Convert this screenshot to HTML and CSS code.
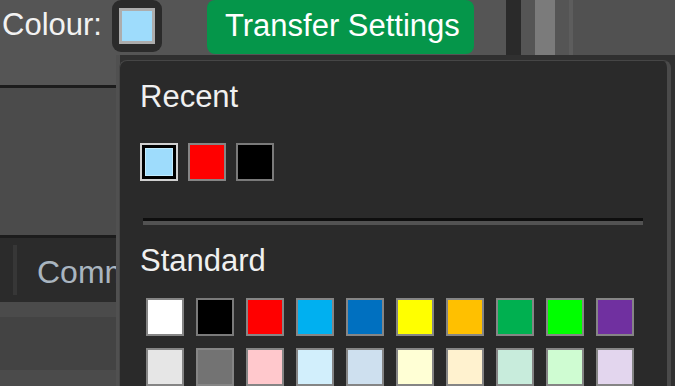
FILE: index.html
```html
<!DOCTYPE html>
<html>
<head>
<meta charset="utf-8">
<link rel="stylesheet" href="styles.css">
</head>
<body>
<div class="page">
  <header class="topbar">
    <span class="label">Colour:</span>
    <button class="swatch-btn"><span class="swatch-fill"></span></button>
    <button class="transfer">Transfer Settings</button>
    <div class="bar-dark"></div>
    <div class="bar-gray"></div>
    <div class="bar-line"></div>
    <div class="bar-rest"></div>
  </header>
  <div class="main">
    <aside class="side">
      <div class="side-top"></div>
      <div class="side-panel"></div>
      <div class="tabs"><span class="tab-sep"></span><span class="tab">Comments</span></div>
      <div class="side-gap"></div>
      <div class="side-box"></div>
      <div class="side-bottom"></div>
    </aside>
    <div class="strip"></div>
    <div class="content"></div>
  </div>
  <div class="popup">
    <div class="heading">Recent</div>
    <div class="recent">
      <span class="sw selected"><span class="sel-fill"></span></span>
      <span class="sw c-red"></span>
      <span class="sw c-black"></span>
    </div>
    <div class="sep"></div>
    <div class="heading heading-std">Standard</div>
    <div class="grid">
      <span class="cell"><span class="sw c-white"></span></span>
      <span class="cell"><span class="sw c-black"></span></span>
      <span class="cell"><span class="sw c-red"></span></span>
      <span class="cell"><span class="sw c-sky"></span></span>
      <span class="cell"><span class="sw c-blue"></span></span>
      <span class="cell"><span class="sw c-yellow"></span></span>
      <span class="cell"><span class="sw c-orange"></span></span>
      <span class="cell"><span class="sw c-green"></span></span>
      <span class="cell"><span class="sw c-lime"></span></span>
      <span class="cell"><span class="sw c-purple"></span></span>
      <span class="cell"><span class="sw l-gray"></span></span>
      <span class="cell"><span class="sw l-dgray"></span></span>
      <span class="cell"><span class="sw l-pink"></span></span>
      <span class="cell"><span class="sw l-sky"></span></span>
      <span class="cell"><span class="sw l-blue"></span></span>
      <span class="cell"><span class="sw l-yellow"></span></span>
      <span class="cell"><span class="sw l-orange"></span></span>
      <span class="cell"><span class="sw l-green"></span></span>
      <span class="cell"><span class="sw l-lime"></span></span>
      <span class="cell"><span class="sw l-purple"></span></span>
    </div>
  </div>
</div>
</body>
</html>
```

FILE: styles.css
```css
* { box-sizing: border-box; }
html, body { margin: 0; padding: 0; }
body {
  width: 675px;
  height: 386px;
  overflow: hidden;
  background: #555555;
  font-family: "Liberation Sans", Arial, sans-serif;
}
.page {
  position: relative;
  width: 675px;
  height: 386px;
  overflow: hidden;
  display: flex;
  flex-direction: column;
}
.topbar {
  display: flex;
  align-items: flex-start;
  height: 55px;
  flex: 0 0 55px;
}
.label {
  margin-left: 2px;
  padding-top: 7px;
  font-size: 31px;
  line-height: 36px;
  color: #f2f2f2;
  white-space: nowrap;
}
.swatch-btn {
  margin-left: 10px;
  width: 50px;
  height: 52px;
  border: none;
  padding: 0;
  border-radius: 9px;
  background: #2b2b2b;
  display: flex;
  align-items: center;
  justify-content: center;
}
.swatch-fill {
  display: block;
  width: 36px;
  height: 36px;
  border: 3px solid #adadad;
  background: #9edcfc;
}
.transfer {
  margin-left: 45px;
  height: 54px;
  border: none;
  border-radius: 8px;
  background: #05964a;
  color: #ffffff;
  font-family: "Liberation Sans", Arial, sans-serif;
  font-size: 31px;
  line-height: 51px;
  padding: 0 14px 3px 18px;
  white-space: nowrap;
}
.bar-dark { margin-left: 32px; width: 15px; height: 55px; background: #2a2a2a; }
.bar-gray { margin-left: 14px; width: 20px; height: 55px; background: #7b7b7b; }
.bar-line { margin-left: 14px; width: 4px; height: 55px; background: #5d5d5d; }
.bar-rest { flex: 1; height: 55px; background: #515151; }

.main {
  flex: 1;
  display: flex;
}
.side {
  width: 116px;
  display: flex;
  flex-direction: column;
  overflow: hidden;
}
.side-top { height: 30px; background: #555555; }
.side-panel {
  height: 153px;
  background: #4b4b4b;
  border-top: 3px solid #1c1c1c;
  border-bottom: 3px solid #1c1c1c;
}
.tabs {
  height: 64px;
  background: #2b2b2b;
  display: flex;
  align-items: flex-start;
  overflow: hidden;
}
.tab-sep {
  flex: 0 0 4px;
  margin-left: 13px;
  margin-top: 7px;
  height: 50px;
  background: #373737;
}
.tab {
  margin-left: 20px;
  padding-top: 16px;
  font-size: 32px;
  line-height: 36px;
  color: #a9b5c0;
  white-space: nowrap;
}
.side-gap { height: 15px; background: #4b4b4b; }
.side-box { height: 53px; background: #434343; }
.side-bottom { flex: 1; background: #4b4b4b; }
.strip { width: 4px; background: #505050; }
.content { flex: 1; background: #303030; }

.popup {
  position: absolute;
  left: 119px;
  top: 60px;
  width: 552px;
  bottom: -20px;
  background: #2a2a2a;
  border: 1px solid #464646;
  border-right: 4px solid #4a4a4a;
  border-radius: 8px 8px 0 0;
  padding: 18px 0 0 20px;
}
.heading {
  font-size: 31px;
  line-height: normal;
  color: #f0f0f0;
}
.recent {
  display: flex;
  gap: 10px;
  margin-top: 28px;
}
.sw {
  display: block;
  width: 38px;
  height: 38px;
  border: 2px solid #858585;
}
.sw.selected {
  border: 2px solid #d0d0d0;
  background: #000000;
  padding: 3px;
}
.sel-fill {
  display: block;
  width: 100%;
  height: 100%;
  background: #9edcfc;
  border: 1px solid #c2ebfd;
}
.sep {
  margin: 37px 0 0 3px;
  width: 500px;
  height: 7px;
  border-top: 3px solid #0e0e0e;
  background: #525252;
}
.heading-std { margin-top: 18px; }
.grid {
  margin-top: 13px;
  display: grid;
  grid-template-columns: repeat(10, 50px);
  grid-auto-rows: 50px;
}
.cell {
  display: flex;
  padding: 6px;
}
.c-white { background: #ffffff; }
.c-black { background: #000000; border-color: #7a7a7a; }
.c-red { background: #ff0000; }
.c-sky { background: #00b0f0; }
.c-blue { background: #0070c0; }
.c-yellow { background: #ffff00; }
.c-orange { background: #ffc000; }
.c-green { background: #00b050; }
.c-lime { background: #00ff00; }
.c-purple { background: #7030a0; }
.l-gray { background: #e6e6e6; }
.l-dgray { background: #737373; }
.l-pink { background: #ffc8cc; }
.l-sky { background: #d2effc; }
.l-blue { background: #cee0ef; }
.l-yellow { background: #ffffd5; }
.l-orange { background: #fff2cf; }
.l-green { background: #c8ecdc; }
.l-lime { background: #cffcd2; }
.l-purple { background: #e3d6ee; }
```
